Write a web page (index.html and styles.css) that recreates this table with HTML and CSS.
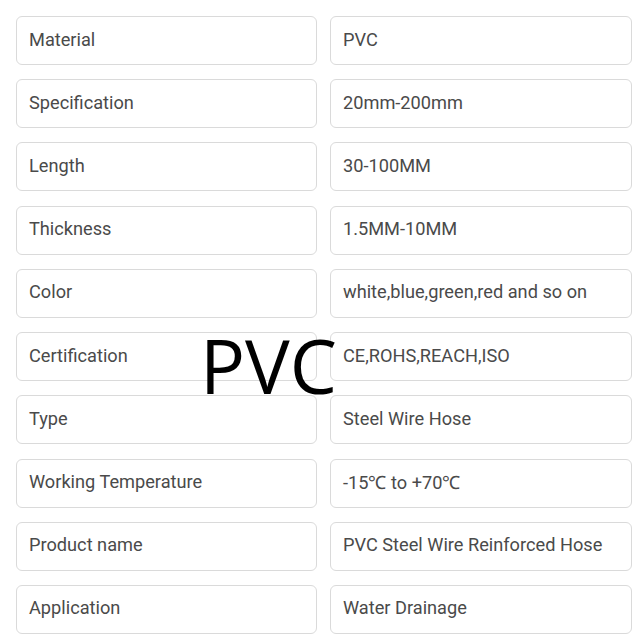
FILE: index.html
```html
<!DOCTYPE html>
<html>
<head>
<meta charset="utf-8">
<link rel="stylesheet" href="styles.css">
</head>
<body>
<div class="page">
  <div class="spec-grid">
    <div class="cell">Material</div><div class="cell">PVC</div>
    <div class="cell">Specification</div><div class="cell">20mm-200mm</div>
    <div class="cell">Length</div><div class="cell">30-100MM</div>
    <div class="cell">Thickness</div><div class="cell">1.5MM-10MM</div>
    <div class="cell">Color</div><div class="cell">white,blue,green,red and so on</div>
    <div class="cell">Certification</div><div class="cell">CE,ROHS,REACH,ISO</div>
    <div class="cell">Type</div><div class="cell">Steel Wire Hose</div>
    <div class="cell">Working Temperature</div><div class="cell">-15℃ to +70℃</div>
    <div class="cell">Product name</div><div class="cell">PVC Steel Wire Reinforced Hose</div>
    <div class="cell">Application</div><div class="cell">Water Drainage</div>
  </div>
  <div class="overlay">PVC</div>
</div>
</body>
</html>
```
FILE: styles.css
```css
html, body {
  margin: 0;
  padding: 0;
  background: #ffffff;
}
.page {
  position: relative;
  width: 640px;
  height: 640px;
  overflow: hidden;
  padding: 16px 8px 0 16px;
  box-sizing: border-box;
}
.spec-grid {
  display: grid;
  grid-template-columns: 301px 302px;
  grid-auto-rows: 49px;
  column-gap: 13px;
  row-gap: 14.22px;
}
.cell {
  display: flex;
  align-items: center;
  box-sizing: border-box;
  border: 1.5px solid #dadada;
  border-radius: 6px;
  padding: 0 0 3px 12px;
  font-family: Roboto, "Liberation Sans", sans-serif;
  font-size: 18.2px;
  color: #4a4a4a;
  white-space: nowrap;
  background: #fff;
}
.overlay {
  position: absolute;
  left: 200px;
  top: 317px;
  font-family: "Open Sans", "Noto Sans", sans-serif;
  font-size: 75px;
  font-weight: 400;
  line-height: 1.3;
  color: #000;
}
```
